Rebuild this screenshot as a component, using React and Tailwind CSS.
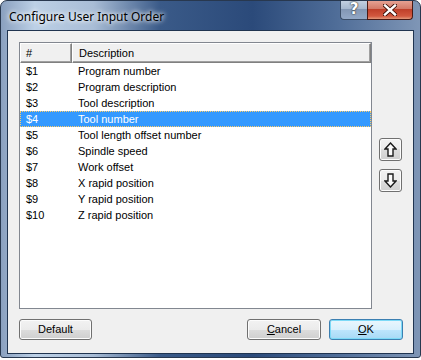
import { useState } from 'react';

const rows = [
    ['$1', 'Program number'],
    ['$2', 'Program description'],
    ['$3', 'Tool description'],
    ['$4', 'Tool number'],
    ['$5', 'Tool length offset number'],
    ['$6', 'Spindle speed'],
    ['$7', 'Work offset'],
    ['$8', 'X rapid position'],
    ['$9', 'Y rapid position'],
    ['$10', 'Z rapid position'],
];

function Arrow({ down }) {
    return (
        <svg width="13" height="15" viewBox="0 0 13 15" className={down ? 'rotate-180' : ''}>
            <path d="M6.5 1 L12 7 L9 7 L9 14 L4 14 L4 7 L1 7 Z" fill="#fafafa" stroke="#1a1a1a" strokeWidth="1.4" strokeLinejoin="miter" />
        </svg>
    );
}

function Button({ children, primary, className = '' }) {
    return (
        <button
            className={`h-[21px] rounded-[3px] border text-[11px] text-black flex items-center justify-center ${
                primary
                    ? 'border-[#3c7fb1] bg-[linear-gradient(#eaf6fd_0%,#d9f0fc_50%,#bee6fd_50%,#a7d9f5_100%)] shadow-[inset_0_0_0_1px_#7ddaf7]'
                    : 'border-[#707070] bg-[linear-gradient(#f2f2f2_0%,#ebebeb_50%,#dddddd_50%,#cfcfcf_100%)] shadow-[inset_0_0_0_1px_#fcfcfc]'
            } ${className}`}
        >
            {children}
        </button>
    );
}

export default function App() {
    const [selected, setSelected] = useState(3);

    return (
        <div className="w-[421px] h-[360px] bg-white font-['Liberation_Sans',Arial,sans-serif]">
            {/* Window frame */}
            <div className="w-[421px] h-[358px] rounded-t-[7px] rounded-b-[3px] border border-[#28384f] bg-[linear-gradient(90deg,#8aa0bf_0%,#bcd0e6_8%,#a9bdd6_22%,#3a5a88_38%,#2b4a7a_60%,#4f6d98_80%,#7f96b6_100%)] flex flex-col overflow-hidden relative">
                {/* Title bar */}
                <div className="h-[29px] flex items-start relative">
                    <span className="mt-[7px] ml-[8px] text-[12px] text-black font-['Noto_Sans',sans-serif] [text-shadow:0_0_6px_#ffffff,0_0_4px_#ffffff]">
                        Configure User Input Order
                    </span>
                    <div className="absolute right-[7px] top-[-1px] flex">
                        <div className="w-[27px] h-[20px] rounded-bl-[4px] border border-[#3b4d66] border-t-0 border-r-0 bg-[linear-gradient(#c6d3e3_0%,#a4b6cd_50%,#8397b4_50%,#93a8c6_100%)] flex items-center justify-center text-white font-bold text-[15px] font-['DejaVu_Sans',sans-serif] [text-shadow:0_0_1px_#222,0_0_2px_#333]">
                            ?
                        </div>
                        <div className="w-[46px] h-[20px] rounded-br-[4px] border border-[#4a1a14] border-t-0 bg-[linear-gradient(#e8a698_0%,#d47a68_45%,#c0402a_50%,#d2583f_85%,#e39a7c_100%)] flex items-center justify-center">
                            <svg width="14" height="12" viewBox="0 0 14 12">
                                <path d="M2 1.5 L12 10.5 M12 1.5 L2 10.5" stroke="#3a0d05" strokeWidth="4.2" strokeLinecap="square" />
                                <path d="M2 1.5 L12 10.5 M12 1.5 L2 10.5" stroke="#ffffff" strokeWidth="2.4" strokeLinecap="square" />
                            </svg>
                        </div>
                    </div>
                </div>

                {/* Client area */}
                <div className="mx-[6px] h-[324px] border border-[#203450] bg-[#f0f0f0] flex flex-col bg-clip-padding">
                    <div className="flex pl-[11px] pr-[10px] pt-[11px]">
                        {/* List view */}
                        <div className="w-[353px] h-[267px] border border-[#828790] bg-white flex flex-col">
                            <div className="flex h-[20px] text-[11px] text-black">
                                <div className="w-[52px] pl-[5px] flex items-center border border-t-white border-l-white border-r-[#808080] border-b-[#808080] bg-[#f0f0f0] shadow-[inset_-1px_-1px_0_#a0a0a0]">
                                    #
                                </div>
                                <div className="flex-1 pl-[6px] flex items-center border border-t-white border-l-white border-r-[#808080] border-b-[#808080] bg-[#f0f0f0] shadow-[inset_-1px_-1px_0_#a0a0a0]">
                                    Description
                                </div>
                            </div>
                            {rows.map(([id, desc], i) => (
                                <div
                                    key={id}
                                    onClick={() => setSelected(i)}
                                    className={`flex h-[16px] items-center text-[11px] ${
                                        selected === i
                                            ? 'bg-[#3399ff] text-white outline outline-1 outline-dotted outline-[#ffcc66] -outline-offset-1'
                                            : 'text-black'
                                    }`}
                                >
                                    <span className="w-[52px] pl-[6px]">{id}</span>
                                    <span className="pl-[6px]">{desc}</span>
                                </div>
                            ))}
                        </div>

                        {/* Move buttons */}
                        <div className="ml-[7px] pt-[96px] flex flex-col gap-[8px]">
                            <Button className="w-[23px] !h-[23px]"><Arrow /></Button>
                            <Button className="w-[23px] !h-[23px]"><Arrow down /></Button>
                        </div>
                    </div>

                    {/* Bottom buttons */}
                    <div className="flex pl-[11px] pr-[10px] mt-[10px] gap-[8px]">
                        <Button className="w-[73px]">Default</Button>
                        <div className="flex-1" />
                        <Button className="w-[74px]"><span><u>C</u>ancel</span></Button>
                        <Button primary className="w-[74px]"><span><u>O</u>K</span></Button>
                    </div>
                </div>
            </div>
        </div>
    );
}
